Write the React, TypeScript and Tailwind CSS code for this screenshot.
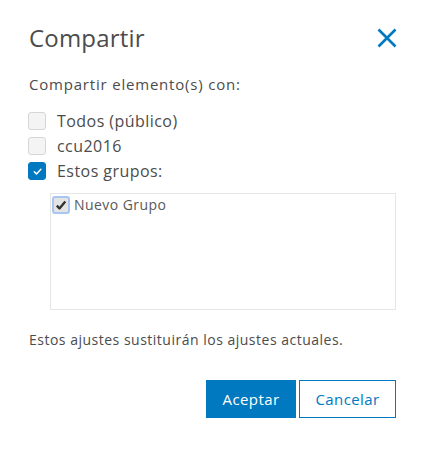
import { useState } from 'react';

function Box({ checked, onClick }: { checked: boolean; onClick: () => void }) {
  return (
    <button
      type="button"
      onClick={onClick}
      className={
        checked
          ? 'w-[18px] h-[18px] rounded-[3px] bg-[#0079c1] border border-[#0079c1] flex items-center justify-center'
          : 'w-[18px] h-[18px] rounded-[3px] bg-[#f4f4f4] border border-[#d6d6d6]'
      }
    >
      {checked && (
        <svg width="11" height="11" viewBox="0 0 12 12" fill="none">
          <path d="M2.5 6.2l2.4 2.4 4.8-5" stroke="white" strokeWidth="1.6" strokeLinecap="round" strokeLinejoin="round" />
        </svg>
      )}
    </button>
  );
}

export default function App() {
  const [all, setAll] = useState(false);
  const [ccu, setCcu] = useState(false);
  const [groups, setGroups] = useState(true);
  const [nuevo, setNuevo] = useState(true);

  const rows = [
    { label: 'Todos (público)', value: all, set: setAll },
    { label: 'ccu2016', value: ccu, set: setCcu },
    { label: 'Estos grupos:', value: groups, set: setGroups },
  ];

  return (
    <div className="w-[426px] h-[453px] bg-white text-[#4c4c4c] font-['Open_Sans','Lato',sans-serif]">
      <div className="pl-[29px] pr-[30px] pt-[22px]">
        {/* Header */}
        <div className="flex items-center justify-between">
          <h1 className="text-[24px] leading-[32px] font-normal text-[#4c4c4c] tracking-[0.2px]">Compartir</h1>
          <button type="button" className="text-[#0079c1] -mr-[1px]">
            <svg width="20" height="20" viewBox="0 0 20 20" fill="none">
              <path d="M1.5 1.5l17 17M18.5 1.5l-17 17" stroke="currentColor" strokeWidth="2.6" />
            </svg>
          </button>
        </div>

        <p className="mt-[20px] text-[15px] leading-[20px] tracking-[0.8px]">Compartir elemento(s) con:</p>

        {/* Options */}
        <div className="mt-[18px] flex flex-col gap-[7px] -ml-[1px]">
          {rows.map((r) => (
            <label key={r.label} className="flex items-center gap-[11px] h-[18px]">
              <Box checked={r.value} onClick={() => r.set(!r.value)} />
              <span className="text-[16px] leading-[20px] tracking-[0.45px]">{r.label}</span>
            </label>
          ))}
        </div>

        {/* Groups list */}
        <div className="mt-[13px] ml-[21px] h-[117px] border border-[#e6e6e6] pl-[1px] pt-[2px]">
          <label className="flex items-center gap-[4px]">
            <button
              type="button"
              onClick={() => setNuevo(!nuevo)}
              className="w-[18px] h-[18px] rounded-[3px] border-2 border-[#a9c5f2] bg-[#e4e4e4] flex items-center justify-center"
            >
              {nuevo && (
                <svg width="12" height="12" viewBox="0 0 12 12" fill="none">
                  <path d="M1.8 6.6l2.7 2.8L10.3 2.4" stroke="#333" strokeWidth="2.4" strokeLinejoin="round" />
                </svg>
              )}
            </button>
            <span className="text-[14px] leading-[18px] text-[#595959] tracking-[0.45px]">Nuevo Grupo</span>
          </label>
        </div>

        <p className="mt-[20px] text-[14px] leading-[20px] tracking-[0.5px]">Estos ajustes sustituirán los ajustes actuales.</p>

        {/* Footer buttons */}
        <div className="mt-[30px] flex justify-end gap-[3px]">
          <button type="button" className="w-[90px] h-[38px] bg-[#0079c1] text-white text-[15px] tracking-[0.4px]">
            Aceptar
          </button>
          <button type="button" className="w-[97px] h-[38px] bg-white border border-[#0079c1] text-[#0079c1] text-[15px] tracking-[0.4px]">
            Cancelar
          </button>
        </div>
      </div>
    </div>
  );
}
